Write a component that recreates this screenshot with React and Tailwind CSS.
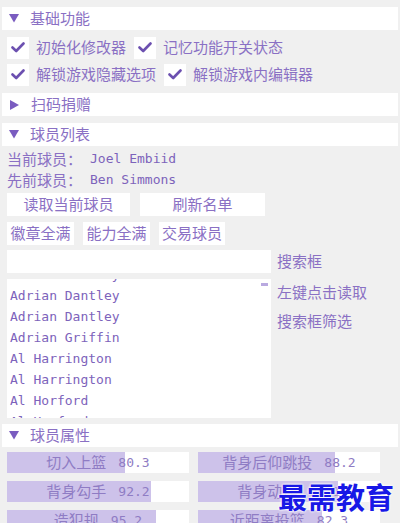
import React from "react";

const cjk = { fontFamily: '"Noto Sans CJK SC", "Noto Sans", sans-serif' };
const mono = { fontFamily: '"DejaVu Sans Mono", "Liberation Mono", monospace' };

function Header({ title, open = true }) {
  return (
    <div className="flex items-center h-[23px] mx-[2px] bg-white">
      {open ? (
        <svg width="10" height="9" viewBox="0 0 10 9" className="ml-[7px]">
          <path d="M0 0 L10 0 L5 8.5 Z" fill="#7a5cc0" />
        </svg>
      ) : (
        <svg width="10" height="10" viewBox="0 0 10 10" className="ml-[8px]">
          <path d="M0 0 L9 5 L0 10 Z" fill="#7a5cc0" />
        </svg>
      )}
      <span className="ml-[11px] text-[15px] text-[#8a70c4]" style={cjk}>{title}</span>
    </div>
  );
}

function Check({ label }) {
  return (
    <div className="flex items-center">
      <div className="w-[22px] h-[22px] bg-white flex items-center justify-center">
        <svg width="14" height="11" viewBox="0 0 14 11">
          <path d="M1.5 5.5 L5.2 9 L12.5 1.5" stroke="#6c50b0" strokeWidth="2.6" fill="none" strokeLinecap="round" strokeLinejoin="round" />
        </svg>
      </div>
      <span className="ml-[7px] text-[15px] text-[#8a70c4]" style={cjk}>{label}</span>
    </div>
  );
}

function Btn({ label, w }) {
  return (
    <div className={`h-[23px] bg-white flex items-center justify-center text-[15px] text-[#8a70c4] ${w}`} style={cjk}>
      {label}
    </div>
  );
}

function Bar({ label, value, pct }) {
  return (
    <div className="relative w-[182px] h-[21px] bg-white">
      <div className="absolute left-0 top-0 h-full bg-[#cdc2ea]" style={{ width: `${pct}%` }} />
      <div className="relative h-full flex items-center justify-center text-[#8f7cc4]">
        <span className="text-[15px]" style={cjk}>{label}</span>
        <span className="ml-[12px] text-[13px]" style={mono}>{value}</span>
      </div>
    </div>
  );
}

const players = [
  "Adrian Dantley",
  "Adrian Dantley",
  "Adrian Dantley",
  "Adrian Griffin",
  "Al Harrington",
  "Al Harrington",
  "Al Horford",
  "Al Horford",
];

export default function App() {
  return (
    <div className="relative w-[400px] h-[523px] overflow-hidden bg-[#f0f0f0] pt-[7px]">
      <Header title="基础功能" />
      <div className="flex items-center h-[23px] mt-[6px] ml-[7px] gap-[8px]">
        <Check label="初始化修改器" />
        <Check label="记忆功能开关状态" />
      </div>
      <div className="flex items-center h-[23px] mt-[4px] ml-[7px] gap-[8px]">
        <Check label="解锁游戏隐藏选项" />
        <Check label="解锁游戏内编辑器" />
      </div>
      <div className="mt-[7px]">
        <Header title="扫码捐赠" open={false} />
      </div>
      <div className="mt-[7px]">
        <Header title="球员列表" />
      </div>
      <div className="flex items-center h-[20px] mt-[3px] ml-[7px] text-[#8a70c4]">
        <span className="text-[15px]" style={cjk}>当前球员：</span>
        <span className="ml-[8px] text-[13px] text-[#7d63bb]" style={mono}>Joel Embiid</span>
      </div>
      <div className="flex items-center h-[20px] mt-[1px] ml-[7px] text-[#8a70c4]">
        <span className="text-[15px]" style={cjk}>先前球员：</span>
        <span className="ml-[8px] text-[13px] text-[#7d63bb]" style={mono}>Ben Simmons</span>
      </div>
      <div className="flex mt-[3px] ml-[7px] gap-[10px]">
        <Btn label="读取当前球员" w="w-[123px]" />
        <Btn label="刷新名单" w="w-[125px]" />
      </div>
      <div className="flex mt-[6px] ml-[7px] gap-[9px]">
        <Btn label="徽章全满" w="w-[67px]" />
        <Btn label="能力全满" w="w-[67px]" />
        <Btn label="交易球员" w="w-[66px]" />
      </div>
      <div className="flex mt-[5px] ml-[7px]">
        <div className="flex flex-col">
          <div className="w-[264px] h-[23px] bg-white" />
          <div className="relative w-[264px] h-[139px] mt-[6px] bg-white overflow-hidden">
            <div className="mt-[-15px] ml-[3px]">
              {players.map((p, i) => (
                <div key={i} className="h-[21px] flex items-center text-[13px] text-[#7d63bb]" style={mono}>
                  {p}
                </div>
              ))}
            </div>
            <div className="absolute right-[3px] top-[4px] w-[7px] h-[3px] bg-[#b9a9e0]" />
          </div>
        </div>
        <div className="ml-[6px] flex flex-col text-[15px] text-[#8a70c4]" style={cjk}>
          <div className="h-[23px] flex items-center">搜索框</div>
          <div className="h-[21px] mt-[9px] flex items-center">左键点击读取</div>
          <div className="h-[21px] mt-[8px] flex items-center">搜索框筛选</div>
        </div>
      </div>
      <div className="mt-[6px]">
        <Header title="球员属性" />
      </div>
      <div className="flex flex-col mt-[5px] ml-[7px] gap-[8px]">
        <div className="flex gap-[9px]">
          <Bar label="切入上篮" value="80.3" pct={65} />
          <Bar label="背身后仰跳投" value="88.2" pct={75} />
        </div>
        <div className="flex gap-[9px]">
          <Bar label="背身勾手" value="92.2" pct={79} />
          <Bar label="背身动作" value="90.1" pct={77} />
        </div>
        <div className="flex gap-[9px]">
          <Bar label="造犯规" value="95.2" pct={82} />
          <Bar label="近距离投篮" value="82.3" pct={68} />
        </div>
      </div>
      <div
        className="absolute left-[278px] top-[475px] text-[29px] font-bold text-[#1818e6] [text-shadow:0_0_2px_#fff,0_0_2px_#fff,0_0_3px_#fff]"
        style={{ fontFamily: '"Noto Sans CJK SC", serif' }}
      >
        最需教育
      </div>
    </div>
  );
}
